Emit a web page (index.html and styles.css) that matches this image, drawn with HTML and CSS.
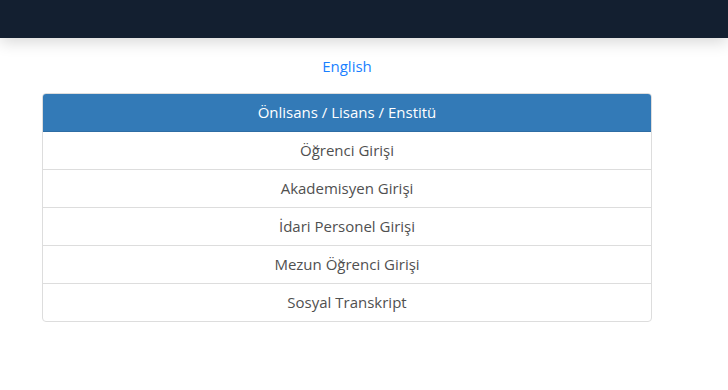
FILE: index.html
```html
<!DOCTYPE html>
<html lang="tr">
<head>
    <meta charset="UTF-8">
    <title>Giriş</title>
    <link rel="stylesheet" href="styles.css">
</head>
<body>
    <header class="topbar"></header>

    <main class="content">
        <div class="lang">
            <a href="#">English</a>
        </div>

        <div class="login-list">
            <div class="list-heading">Önlisans / Lisans / Enstitü</div>
            <a class="list-item" href="#">Öğrenci Girişi</a>
            <a class="list-item" href="#">Akademisyen Girişi</a>
            <a class="list-item" href="#">İdari Personel Girişi</a>
            <a class="list-item" href="#">Mezun Öğrenci Girişi</a>
            <a class="list-item" href="#">Sosyal Transkript</a>
        </div>
    </main>
</body>
</html>
```

FILE: styles.css
```css
body {
    margin: 0;
    font-family: "Open Sans", "Noto Sans", sans-serif;
    font-size: 15px;
    background: #fff;
    color: #555;
}

.topbar {
    height: 38px;
    background-color: #131f30;
    box-shadow: 0 4px 16px rgba(0, 0, 0, 0.16);
    position: relative;
}

.content {
    width: 610px;
    margin-left: 42px;
    padding-top: 16px;
}

.lang {
    text-align: center;
    height: 24px;
    line-height: 24px;
    margin-bottom: 15px;
}

.lang a {
    color: #1a7fff;
    text-decoration: none;
}

.login-list {
    display: flex;
    flex-direction: column;
    border: 1px solid #ddd;
    border-radius: 4px;
    overflow: hidden;
}

.list-heading {
    background-color: #337ab7;
    color: #fff;
    text-align: center;
    height: 37px;
    line-height: 37px;
    border-bottom: 1px solid #2e6da4;
}

.list-item {
    display: block;
    text-align: center;
    height: 37px;
    line-height: 37px;
    color: #505050;
    text-decoration: none;
    border-top: 1px solid #ddd;
}

.list-heading + .list-item {
    border-top: none;
}
```
